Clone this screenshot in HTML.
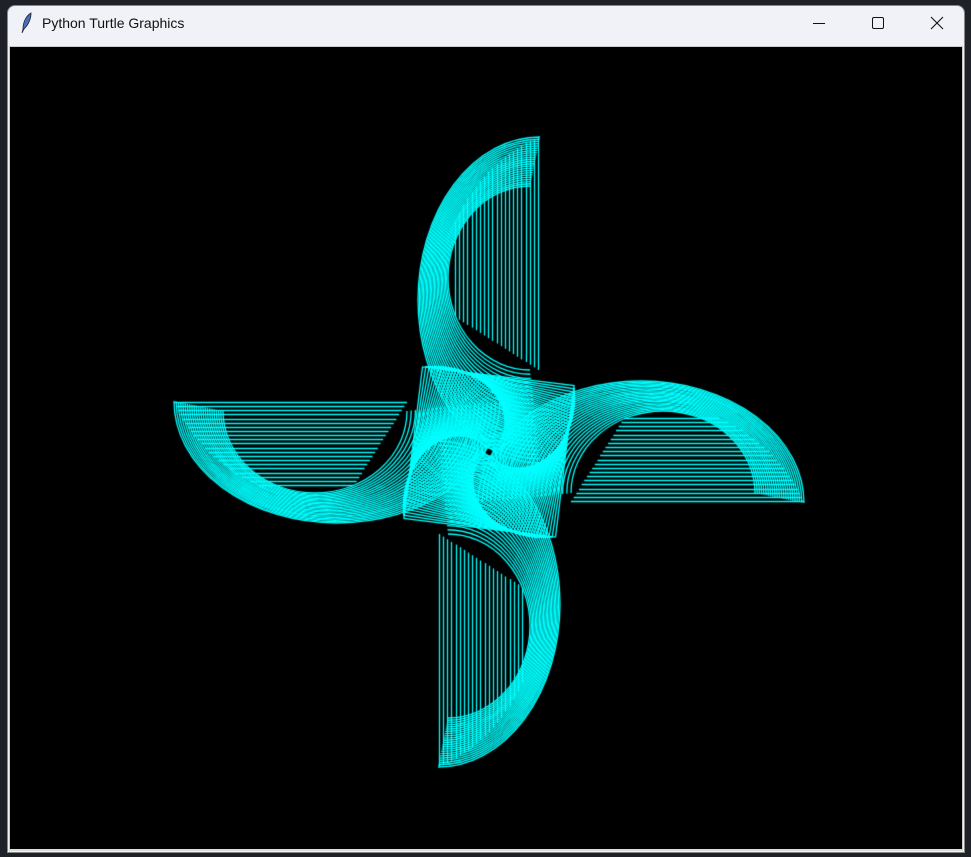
<!DOCTYPE html>
<html><head><style>
html,body{margin:0;padding:0;width:971px;height:857px;overflow:hidden;background:#1f2129;font-family:"Liberation Sans",sans-serif;}
#win{position:absolute;left:7px;top:5px;width:958px;height:848px;background:#f0f2f7;border-radius:8px 8px 0 0;border:1px solid #888;box-sizing:border-box;}
#title{position:absolute;left:42px;top:15px;font-size:14px;color:#111;}
#cv{position:absolute;left:9px;top:46px;border:1px solid #ccc;border-bottom:2px solid #ddd;}
</style></head><body>
<div id="win"></div>
<svg style="position:absolute;left:20px;top:12px" width="14" height="22" viewBox="0 0 14 22"><path d="M11 1 C6 4 3 10 3 17 L2 21 L4 17 C8 13 11 8 11 1Z" fill="#4a6fb5" stroke="#223" stroke-width="0.8"/></svg>
<div id="title">Python Turtle Graphics</div>
<svg style="position:absolute;left:812px;top:16px" width="14" height="14"><line x1="1" y1="7.5" x2="13" y2="7.5" stroke="#111"/></svg>
<svg style="position:absolute;left:871px;top:16px" width="14" height="14"><rect x="1.5" y="1.5" width="11" height="11" rx="1.5" fill="none" stroke="#111"/></svg>
<svg style="position:absolute;left:930px;top:16px" width="14" height="14"><path d="M1 1 L13 13 M13 1 L1 13" stroke="#111" stroke-width="1.1"/></svg>
<canvas id="cv" width="952" height="802" style="background:#000"></canvas>
<script>
var c=document.getElementById('cv').getContext('2d');
c.strokeStyle='#00ffff';c.lineWidth=1.3;
var ox=489-10,oy=452-47;
function L(a,b,t){return a+(b-a)*t;}
function arm(rot){
 c.save();c.translate(ox,oy);c.rotate(rot);
 var N=22;
 for(var k=0;k<=N;k++){
  var t=k/N;
  var cx=L(41,51,t), cy=L(-174,-152,t), rx=L(82,122,t), ry=L(92,163,t);
  c.beginPath();
  c.ellipse(cx,cy,rx,ry,0,-Math.PI/2,Math.PI*0.5,true);
  c.stroke();
 }
 var V=20;
 for(var k=0;k<=V;k++){
  var t=k/V;
  var x=-34+83*t;
  var tt=0.3+0.7*t;
  var cx=L(41,51,tt), cy=L(-174,-152,tt), rx=L(82,122,tt), ry=L(92,163,tt);
  var u=(x-cx)/rx; var yt=cy-ry*Math.sqrt(Math.max(0,1-u*u));
  var yb=-135+53*t;
  c.beginPath();c.moveTo(Math.round(x)+0.5,yt);c.lineTo(Math.round(x)+0.5,yb);c.stroke();
 }
 c.restore();
}
for(var a=0;a<4;a++)arm(a*Math.PI/2);
c.save();c.translate(ox,oy);
var M=60;
for(var k=1;k<=M;k++){
 var t=k/M;
 var h=4+104*t, ang=52*Math.PI/180+(1-t)*1.6;
 c.beginPath();
 for(var j=0;j<=4;j++){
  var aa=ang+j*Math.PI/2;
  var px=h*Math.cos(aa),py=h*Math.sin(aa);
  if(j==0)c.moveTo(px,py);else c.lineTo(px,py);
 }
 c.stroke();
}
c.restore();
</script>
</body></html>
